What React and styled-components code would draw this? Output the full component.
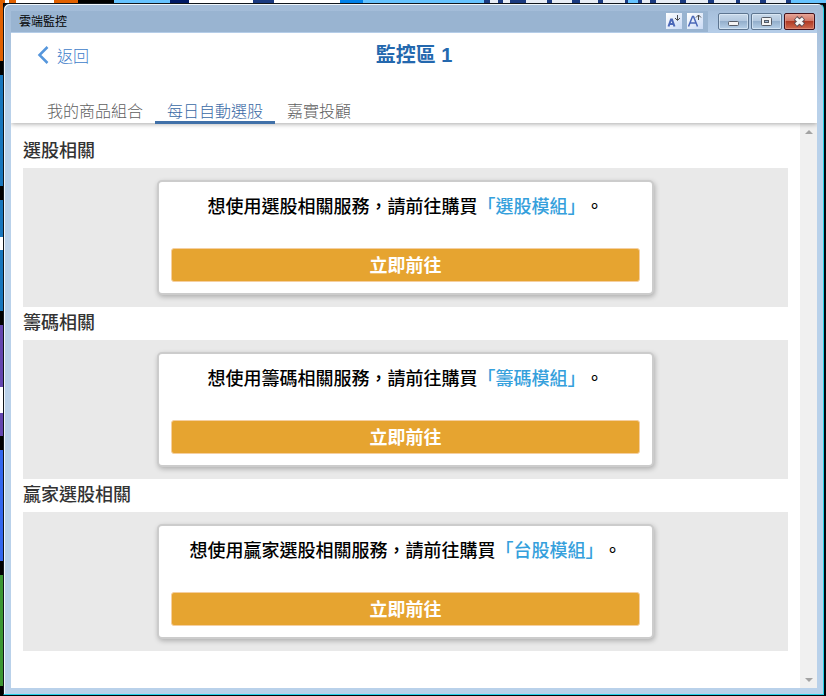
import React, { useState } from 'react';
import styled, { createGlobalStyle } from 'styled-components';

const tabs = ['我的商品組合', '每日自動選股', '嘉實投顧'];

const sections = [
    { title: '選股相關', service: '選股相關服務', module: '選股模組' },
    { title: '籌碼相關', service: '籌碼相關服務', module: '籌碼模組' },
    { title: '贏家選股相關', service: '贏家選股相關服務', module: '台股模組' },
];

function TitleBar() {
    return (
        <Caption>
            <CaptionTitle>
                <span>雲端監控</span>
                <FontTools>
                    <FontButton type='button' aria-label='縮小字型'>
                        <svg width='16' height='16' viewBox='0 0 16 16'>
                            <path d='M2.500 13.500 5 6.500h1l2.500 7M3.500 11h4' fill='none' stroke='#4b68b8' strokeWidth='2' />
                            <path d='M11.500 2v5M9 5l2.500 2.500L14 5' fill='none' stroke='#4a4a4a' />
                        </svg>
                    </FontButton>
                    <FontButton type='button' aria-label='放大字型'>
                        <svg width='16' height='16' viewBox='0 0 16 16'>
                            <path d='M1.500 13.500 5.500 3.500h1l4 10M3 10h6' fill='none' stroke='#4b68b8' strokeWidth='1.500' />
                            <path d='M11.500 7V2M9 4.500 11.500 2 14 4.500' fill='none' stroke='#4a4a4a' />
                        </svg>
                    </FontButton>
                </FontTools>
            </CaptionTitle>
            <WindowTools>
                <WindowButton type='button' aria-label='最小化'>
                    <svg width='29' height='15' viewBox='0 0 29 15'>
                        <rect x='9.500' y='7.500' width='10' height='4' rx='1' fill='#f4f4f4' stroke='#555b66' />
                    </svg>
                </WindowButton>
                <WindowButton type='button' aria-label='最大化'>
                    <svg width='29' height='15' viewBox='0 0 29 15'>
                        <rect x='9.500' y='3.500' width='10' height='8' rx='1' fill='#f4f4f4' stroke='#555b66' />
                        <rect x='12.500' y='6.500' width='4' height='2' fill='#9db6d2' stroke='#555b66' />
                    </svg>
                </WindowButton>
                <WindowButton type='button' aria-label='關閉' $close>
                    <svg width='29' height='15' viewBox='0 0 29 15'>
                        <path d='M10.500 4 18.500 11M18.500 4 10.500 11' stroke='#5d4a50' strokeWidth='5' />
                        <path d='M11 4.500 18 10.500M18 4.500 11 10.500' stroke='#f6f6f6' strokeWidth='3' />
                    </svg>
                </WindowButton>
            </WindowTools>
        </Caption>
    );
}

function Section({ title, service, module }) {
    return (
        <section>
            <SectionTitle>{title}</SectionTitle>
            <Panel>
                <Card>
                    <Message>
                        想使用{service}，請前往購買<ModuleLink href='#'>「{module}」</ModuleLink>。
                    </Message>
                    <GoButton type='button'>立即前往</GoButton>
                </Card>
            </Panel>
        </section>
    );
}

export default function App() {
    const [currentTab, setCurrentTab] = useState(1);

    return (
        <>
            <GlobalStyle />
            <Desktop lang='zh-Hant'>
                <Window>
                    <TitleBar />
                    <Client>
                        <Header>
                            <HeaderRow>
                                <BackButton type='button'>
                                    <svg width='12' height='18' viewBox='0 0 12 18'>
                                        <path d='M10.500 1 2.500 9l8 8' fill='none' stroke='#5596dc' strokeWidth='2.500' />
                                    </svg>
                                    返回
                                </BackButton>
                                <PageTitle>監控區 1</PageTitle>
                            </HeaderRow>
                            <Tabs>
                                {tabs.map((tab, index) => (
                                    <Tab
                                        key={tab}
                                        type='button'
                                        $active={index === currentTab}
                                        onClick={() => setCurrentTab(index)}
                                    >
                                        {tab}
                                    </Tab>
                                ))}
                            </Tabs>
                        </Header>
                        <Body>
                            <Content>
                                {sections.map((item) => (
                                    <Section key={item.title} {...item} />
                                ))}
                            </Content>
                            <ScrollRail>
                                <RailButton type='button' aria-label='向上捲動'>
                                    <svg width='8' height='4' viewBox='0 0 8 4'>
                                        <path d='M0 4 4 0l4 4z' fill='#a3a3a3' />
                                    </svg>
                                </RailButton>
                                <RailButton type='button' aria-label='向下捲動'>
                                    <svg width='8' height='4' viewBox='0 0 8 4'>
                                        <path d='M0 0h8L4 4z' fill='#a3a3a3' />
                                    </svg>
                                </RailButton>
                            </ScrollRail>
                        </Body>
                    </Client>
                </Window>
            </Desktop>
        </>
    );
}

const GlobalStyle = createGlobalStyle`
* {
    box-sizing: border-box;
}
body {
    margin: 0;
    font-family: "Noto Sans CJK TC", "Liberation Sans", sans-serif;
    text-spacing-trim: space-all;
}
button {
    margin: 0;
    padding: 0;
    border: none;
    background: none;
    font-family: inherit;
    cursor: pointer;
}
svg {
    display: block;
}
`;

/* wallpaper: one strip above the window, one down its left side */
const Desktop = styled.div`
display: flex;
min-height: 100vh;
padding: 3px 2px 1px 3px;
background-color: #02050c;
background-image:
    linear-gradient(to right,
        #e06000 5px, #fff 5px 9px, #e06000 9px 16px, #fff 16px 54px,
        #e06000 54px 78px, #000 78px 114px, #66c3ff 114px 170px,
        #001a66 170px 189px, #fff 189px 253px, #1a3a80 253px 274px,
        #fff 274px 340px, #0080e8 340px 363px, #66c3ff 363px 484px,
        #1a3a80 484px 490px, #e8edf5 490px 498px, #1a3a80 498px 503px,
        #e8edf5 503px 510px, #1a3a80 510px 526px, #e8edf5 526px 547px,
        #1a3a80 547px 552px, #e8edf5 552px 572px, #1a3a80 572px 580px,
        #e8edf5 580px 598px, #1a3a80 598px 603px, #e8edf5 603px 625px,
        #1a3a80 625px 628px, #66c3ff 628px 638px, #1a3a80 638px 642px,
        #e8edf5 642px 650px, #1a3a80 650px 656px, #e8edf5 656px 680px,
        #1a3a80 680px 686px, #e8edf5 686px 708px, #1a3a80 708px 714px,
        #e8edf5 714px 736px, #1a3a80 736px 740px, #e8edf5 740px 760px,
        #1a3a80 760px 766px, #e8edf5 766px 786px, #1a3a80 786px 791px,
        #66c3ff 791px),
    linear-gradient(to bottom,
        #e06000 61px, #000 61px 75px, #1876bc 75px 186px, #000 186px 200px,
        #1876bc 200px 237px, #fff 237px 250px, #1876bc 250px 311px,
        #000 311px 325px, #6446b0 325px 387px, #fff 387px 413px,
        #6446b0 413px 436px, #000 436px 450px, #3366ee 450px 561px,
        #000 561px 575px, #3c9632 575px 686px, #000 686px);
background-size: 100% 3px, 3px 100%;
background-repeat: no-repeat;
`;

const Window = styled.div`
flex: 1;
display: flex;
flex-direction: column;
padding: 0 6px 6px 7px;
border: 1px solid #10161c;
border-right-color: #25cfe6;
border-bottom-color: #25cfe6;
border-radius: 6px 6px 0 0;
background: linear-gradient(to bottom, #a2bbd7, #b9d1ea 100px);
box-shadow: inset 1px 1px 0 #f0f7fd;
`;

const Caption = styled.div`
display: flex;
align-items: stretch;
height: 29px;
padding-top: 7px;
border-bottom: 1px solid #b5cde8;
`;

const CaptionTitle = styled.div`
flex: 1;
display: flex;
align-items: center;
justify-content: space-between;
padding: 0 5px 2px 8px;
background: #99b4d1;
color: #000;
font-size: 12px;
line-height: 16px;
`;

const FontTools = styled.div`
display: flex;
gap: 5px;
`;

const FontButton = styled.button`
width: 16px;
height: 16px;
background: linear-gradient(135deg, #fff, #c9daf5);
`;

const WindowTools = styled.div`
display: flex;
gap: 2px;
padding: 2px 2px 2px 10px;
background: linear-gradient(to bottom, #a6bfdb, #b5cde8);
`;

const WindowButton = styled.button`
width: 31px;
height: 17px;
border: 1px solid ${(props) => (props.$close ? '#43101a' : '#5d7590')};
border-radius: 2px;
background: ${(props) =>
        props.$close
            ? 'linear-gradient(to bottom, #e5a397, #d27868 45%, #b03a25 50%, #cf6a50)'
            : 'linear-gradient(to bottom, #c8d9ea, #b3c8df 45%, #94afcc 50%, #b7d0e8)'};
box-shadow: inset 0 0 0 1px ${(props) => (props.$close ? '#e9a99c80' : '#e6f1fb99')};
`;

const Client = styled.div`
flex: 1;
display: flex;
flex-direction: column;
background: #fff;
`;

const Header = styled.header`
position: relative;
display: flex;
flex-direction: column;
justify-content: space-between;
height: 90px;
background: #fff;
box-shadow: 0 1px 5px rgba(0, 0, 0, 0.35);
clip-path: inset(0 0 -8px 0);
`;

const HeaderRow = styled.div`
display: grid;
grid-template-columns: 1fr auto 1fr;
align-items: center;
height: 44px;
padding: 0 26px;
`;

const BackButton = styled.button`
display: flex;
align-items: center;
justify-self: start;
gap: 8px;
color: #3d7cc9;
font-size: 16px;
font-weight: 300;
line-height: 24px;
`;

const PageTitle = styled.h1`
margin: 0;
color: #2468ae;
font-family: "Liberation Sans", "Noto Sans CJK TC", sans-serif;
font-size: 20px;
font-weight: 700;
line-height: 28px;
`;

const Tabs = styled.nav`
display: flex;
margin-bottom: -1px;
padding: 0 24px;
`;

const Tab = styled.button`
padding: 0 12px;
border-bottom: 3px solid ${(props) => (props.$active ? '#4070a8' : 'transparent')};
color: ${(props) => (props.$active ? '#3868a4' : '#606060')};
font-size: 16px;
font-weight: 300;
line-height: 22px;
`;

const Body = styled.div`
flex: 1;
display: flex;
`;

const Content = styled.main`
flex: 1;
padding: 12px;
`;

const SectionTitle = styled.h2`
margin: 0;
padding-bottom: 4px;
color: #333;
font-size: 18px;
font-weight: 500;
line-height: 29px;
`;

const Panel = styled.div`
display: flex;
justify-content: center;
padding: 12px;
background: #e9e9e9;
`;

const Card = styled.div`
display: flex;
flex-direction: column;
gap: 32px;
width: 67%;
padding: 12px;
padding-bottom: 11px;
border: 2px solid #ccc;
border-radius: 5px;
background: #fff;
box-shadow: 1px 2px 5px rgba(0, 0, 0, 0.25);
`;

const Message = styled.p`
margin: 0;
color: #000;
font-size: 18px;
font-weight: 500;
line-height: 22px;
text-align: center;
`;

const ModuleLink = styled.a`
color: #35a0dc;
text-decoration: none;
`;

const GoButton = styled.button`
height: 34px;
padding-bottom: 2px;
border: 1px solid #f5cfa0;
border-radius: 3px;
background: #e6a430;
color: #fff;
font-size: 18px;
font-weight: 700;
line-height: 24px;
`;

const ScrollRail = styled.div`
display: flex;
flex-direction: column;
justify-content: space-between;
width: 17px;
background: #f0f0f0;
`;

const RailButton = styled.button`
display: flex;
align-items: center;
justify-content: center;
height: 17px;
`;
